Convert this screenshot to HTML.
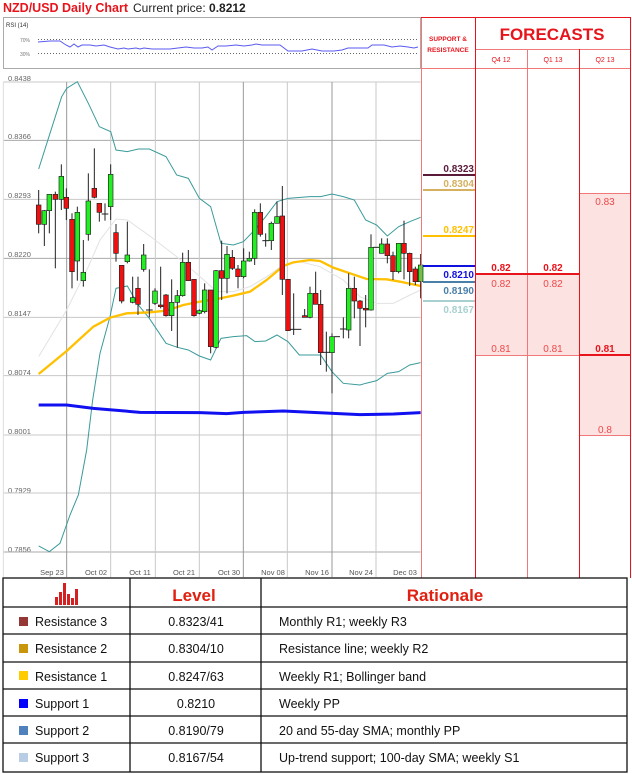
<!DOCTYPE html>
<html><head><meta charset="utf-8"><style>
html,body{margin:0;padding:0;background:#fff;width:632px;height:774px;overflow:hidden;font-family:"Liberation Sans",sans-serif}
svg{position:absolute;left:0;top:0}
</style></head><body>
<svg width="632" height="774" viewBox="0 0 632 774" xmlns="http://www.w3.org/2000/svg" font-family="Liberation Sans, sans-serif">
<!-- title -->
<text x="3" y="12" font-size="12.5" font-weight="bold" fill="#e8141c">NZD/USD Daily Chart</text>
<text x="133" y="12" font-size="12" fill="#222">Current price: <tspan font-weight="bold">0.8212</tspan></text>
<!-- RSI -->
<rect x="3.5" y="17.5" width="417" height="51" fill="#fff" stroke="#aaa"/>
<text x="6" y="27" font-size="6" fill="#333">RSI (14)</text>
<text x="20" y="42" font-size="5" fill="#777">70%</text>
<text x="20" y="56" font-size="5" fill="#777">30%</text>
<line x1="38" y1="39.5" x2="418" y2="39.5" stroke="#666" stroke-dasharray="1,2"/>
<line x1="38" y1="53.5" x2="418" y2="53.5" stroke="#666" stroke-dasharray="1,2"/>
<polyline fill="none" stroke="#5a5af0" stroke-width="1" points="38,42 50,41 60,41 66,45 70,47 74,44 78,47 82,45 90,45 96,46 104,45 110,47 118,49 124,48 128,49 136,48 140,49 144,48 152,49 160,49 170,49 178,48 186,47 194,48 202,48 208,47 212,50 218,46 226,46 236,45 244,46 252,45 256,44 262,45 272,45 280,45 288,51 302,51 312,49 322,51 334,51 342,50 348,48 358,48 368,48 372,45 384,45 392,47 400,46 408,47 414,48 418,47"/>

<!-- Y labels -->
<g font-size="7.5" fill="#666">
<text x="8" y="81">0.8438</text><text x="8" y="139">0.8366</text><text x="8" y="198">0.8293</text>
<text x="8" y="257">0.8220</text><text x="8" y="316">0.8147</text><text x="8" y="375">0.8074</text>
<text x="8" y="434">0.8001</text><text x="8" y="493">0.7929</text><text x="8" y="552">0.7856</text>
</g>
<!-- X labels -->
<g font-size="7.5" fill="#555" text-anchor="middle">
<text x="52" y="575">Sep 23</text><text x="96" y="575">Oct 02</text><text x="140" y="575">Oct 11</text>
<text x="184" y="575">Oct 21</text><text x="229" y="575">Oct 30</text><text x="273" y="575">Nov 08</text>
<text x="317" y="575">Nov 16</text><text x="361" y="575">Nov 24</text><text x="405" y="575">Dec 03</text>
</g>

<g transform="translate(0,70) scale(0.33333)">
<!-- grid -->
<g stroke="#c8c8c8" stroke-width="3">
<line x1="10" y1="36" x2="1262" y2="36"/><line x1="10" y1="211" x2="1262" y2="211" stroke="#aaa"/>
<line x1="10" y1="388" x2="1262" y2="388"/><line x1="10" y1="565" x2="1262" y2="565" stroke="#aaa"/>
<line x1="10" y1="742" x2="1262" y2="742"/><line x1="10" y1="917" x2="1262" y2="917"/>
<line x1="10" y1="1095" x2="1262" y2="1095"/><line x1="10" y1="1269" x2="1262" y2="1269"/>
<line x1="10" y1="1446" x2="1262" y2="1446" stroke="#aaa"/>
<line x1="200" y1="36" x2="200" y2="1521" stroke="#999"/><line x1="332" y1="36" x2="332" y2="1521"/>
<line x1="466" y1="36" x2="466" y2="1521"/><line x1="598" y1="36" x2="598" y2="1521"/>
<line x1="730" y1="36" x2="730" y2="1521" stroke="#999"/><line x1="862" y1="36" x2="862" y2="1521"/>
<line x1="996" y1="36" x2="996" y2="1521" stroke="#999"/><line x1="1128" y1="36" x2="1128" y2="1521"/>
<line x1="10" y1="36" x2="10" y2="1521" stroke="#ddd"/>
</g>
<!-- bands -->
<polyline fill="none" stroke="#3a9a9a" stroke-width="3" points="116,297 150,190 185,80 200,55 232,35 265,100 298,170 332,185 348,240 382,245 415,237 448,237 498,260 530,315 565,325 598,385 632,410 663,520 700,525 730,515 764,480 797,440 831,395 864,385 930,380 962,380 996,372 1030,380 1063,390 1097,450 1130,465 1162,498 1196,470 1229,455 1262,442"/>
<polyline fill="none" stroke="#3a9a9a" stroke-width="3" points="116,1428 148,1445 180,1420 210,1335 235,1275 260,1140 278,990 300,850 330,740 348,655 382,648 415,705 448,745 498,820 532,832 565,840 598,858 632,870 663,805 700,800 740,797 765,815 797,813 831,795 864,815 898,855 930,855 962,855 996,905 1030,940 1080,945 1097,940 1130,932 1162,910 1196,905 1229,885 1262,878"/>
<polyline fill="none" stroke="#e2e2e2" stroke-width="3" points="116,860 200,720 265,590 300,510 348,447 382,450 448,497 530,560 600,620 650,665 700,665 750,650 800,620 850,585 900,575 960,590 1030,630 1080,680 1130,700 1180,700 1230,675 1262,660"/>
<polyline fill="none" stroke="#ffc000" stroke-width="7" points="116,912 200,843 280,770 330,743 380,730 450,727 500,722 550,705 600,695 650,687 700,677 750,665 800,630 850,588 880,577 930,570 960,573 1000,593 1050,610 1100,627 1160,628 1200,635 1262,648"/>
<polyline fill="none" stroke="#1010f0" stroke-width="9" points="116,1005 200,1005 280,1015 420,1027 600,1028 680,1031 730,1027 850,1023 1000,1030 1080,1034 1180,1032 1262,1028"/>
<!-- candles -->
<g stroke="#222" stroke-width="3">
<line x1="116" y1="360" x2="116" y2="490"/><line x1="133" y1="420" x2="133" y2="528"/><line x1="148" y1="373" x2="148" y2="490"/><line x1="166" y1="365" x2="166" y2="595"/><line x1="184" y1="283" x2="184" y2="420"/><line x1="199" y1="355" x2="199" y2="450"/><line x1="216" y1="430" x2="216" y2="655"/><line x1="232" y1="410" x2="232" y2="632"/><line x1="250" y1="510" x2="250" y2="650"/><line x1="265" y1="310" x2="265" y2="512"/><line x1="283" y1="235" x2="283" y2="385"/><line x1="298" y1="400" x2="298" y2="455"/><line x1="315" y1="400" x2="315" y2="452"/><line x1="332" y1="283" x2="332" y2="450"/><line x1="348" y1="462" x2="348" y2="575"/><line x1="365" y1="586" x2="365" y2="700"/><line x1="382" y1="455" x2="382" y2="580"/><line x1="398" y1="620" x2="398" y2="700"/><line x1="414" y1="620" x2="414" y2="735"/><line x1="431" y1="522" x2="431" y2="605"/><line x1="448" y1="598" x2="448" y2="742"/><line x1="465" y1="655" x2="465" y2="705"/><line x1="482" y1="590" x2="482" y2="715"/><line x1="498" y1="672" x2="498" y2="740"/><line x1="515" y1="628" x2="515" y2="783"/><line x1="532" y1="660" x2="532" y2="833"/><line x1="548" y1="548" x2="548" y2="680"/><line x1="565" y1="540" x2="565" y2="632"/><line x1="582" y1="628" x2="582" y2="740"/><line x1="598" y1="718" x2="598" y2="733"/><line x1="614" y1="640" x2="614" y2="730"/><line x1="632" y1="660" x2="632" y2="850"/><line x1="648" y1="600" x2="648" y2="835"/><line x1="665" y1="512" x2="665" y2="690"/><line x1="681" y1="528" x2="681" y2="670"/><line x1="697" y1="540" x2="697" y2="600"/><line x1="714" y1="585" x2="714" y2="655"/><line x1="731" y1="535" x2="731" y2="625"/><line x1="748" y1="545" x2="748" y2="575"/><line x1="764" y1="418" x2="764" y2="585"/><line x1="781" y1="400" x2="781" y2="500"/><line x1="797" y1="490" x2="797" y2="530"/><line x1="814" y1="455" x2="814" y2="540"/><line x1="831" y1="395" x2="831" y2="460"/><line x1="847" y1="348" x2="847" y2="675"/><line x1="864" y1="628" x2="864" y2="782"/><line x1="881" y1="670" x2="881" y2="795"/><line x1="914" y1="717" x2="914" y2="742"/><line x1="930" y1="650" x2="930" y2="745"/><line x1="947" y1="605" x2="947" y2="703"/><line x1="962" y1="660" x2="962" y2="885"/><line x1="979" y1="785" x2="979" y2="905"/><line x1="996" y1="790" x2="996" y2="970"/><line x1="1030" y1="742" x2="1030" y2="805"/><line x1="1046" y1="610" x2="1046" y2="805"/><line x1="1063" y1="620" x2="1063" y2="745"/><line x1="1080" y1="690" x2="1080" y2="828"/><line x1="1097" y1="675" x2="1097" y2="772"/><line x1="1113" y1="493" x2="1113" y2="722"/><line x1="1145" y1="505" x2="1145" y2="550"/><line x1="1162" y1="505" x2="1162" y2="580"/><line x1="1179" y1="545" x2="1179" y2="630"/><line x1="1196" y1="520" x2="1196" y2="610"/><line x1="1212" y1="452" x2="1212" y2="628"/><line x1="1229" y1="548" x2="1229" y2="648"/><line x1="1246" y1="590" x2="1246" y2="645"/><line x1="1262" y1="552" x2="1262" y2="685"/>
<line x1="305" y1="432" x2="325" y2="432"/><line x1="438" y1="720" x2="458" y2="720"/><line x1="787" y1="512" x2="807" y2="512"/><line x1="871" y1="778" x2="904" y2="778"/><line x1="969" y1="847" x2="989" y2="847"/><line x1="1003" y1="800" x2="1020" y2="800"/><line x1="1020" y1="777" x2="1040" y2="777"/><line x1="1120" y1="532" x2="1140" y2="532"/>
</g>
<g stroke="#222" stroke-width="2">
<g fill="#ee1111">
<rect x="109" y="405" width="14" height="58"/><rect x="159" y="373" width="14" height="15"/><rect x="192" y="382" width="14" height="33"/><rect x="209" y="448" width="14" height="157"/><rect x="276" y="355" width="14" height="27"/><rect x="291" y="400" width="14" height="27"/><rect x="341" y="488" width="14" height="62"/><rect x="358" y="586" width="14" height="107"/><rect x="407" y="655" width="14" height="48"/><rect x="475" y="705" width="14" height="5"/><rect x="491" y="675" width="14" height="62"/><rect x="558" y="577" width="14" height="55"/><rect x="575" y="628" width="14" height="109"/><rect x="625" y="660" width="14" height="170"/><rect x="658" y="602" width="14" height="23"/><rect x="690" y="562" width="14" height="33"/><rect x="707" y="597" width="14" height="23"/><rect x="774" y="427" width="14" height="66"/><rect x="840" y="438" width="14" height="190"/><rect x="857" y="628" width="14" height="154"/><rect x="907" y="737" width="14" height="5"/><rect x="940" y="670" width="14" height="33"/><rect x="955" y="703" width="14" height="145"/><rect x="1056" y="655" width="14" height="38"/><rect x="1073" y="693" width="14" height="22"/><rect x="1090" y="715" width="14" height="5"/><rect x="1155" y="522" width="14" height="35"/><rect x="1172" y="557" width="14" height="48"/><rect x="1205" y="520" width="14" height="30"/><rect x="1222" y="550" width="14" height="55"/><rect x="1239" y="597" width="14" height="38"/>
</g>
<g fill="#22ee22">
<rect x="126" y="422" width="14" height="41"/><rect x="141" y="373" width="14" height="49"/><rect x="177" y="319" width="14" height="69"/><rect x="225" y="427" width="14" height="146"/><rect x="243" y="607" width="14" height="25"/><rect x="258" y="393" width="14" height="100"/><rect x="325" y="313" width="14" height="97"/><rect x="375" y="555" width="14" height="20"/><rect x="391" y="683" width="14" height="14"/><rect x="424" y="555" width="14" height="43"/><rect x="458" y="663" width="14" height="37"/><rect x="508" y="697" width="14" height="40"/><rect x="525" y="677" width="14" height="20"/><rect x="541" y="577" width="14" height="100"/><rect x="591" y="722" width="14" height="8"/><rect x="607" y="660" width="14" height="65"/><rect x="641" y="602" width="14" height="230"/><rect x="674" y="553" width="14" height="72"/><rect x="724" y="573" width="14" height="47"/><rect x="741" y="565" width="14" height="8"/><rect x="757" y="427" width="14" height="138"/><rect x="807" y="460" width="14" height="52"/><rect x="824" y="440" width="14" height="20"/><rect x="923" y="670" width="14" height="72"/><rect x="989" y="800" width="14" height="48"/><rect x="1039" y="655" width="14" height="125"/><rect x="1106" y="532" width="14" height="188"/><rect x="1138" y="522" width="14" height="28"/><rect x="1189" y="520" width="14" height="85"/><rect x="1255" y="585" width="14" height="50"/>
</g>
</g>
</g>

<!-- Right forecast table -->
<rect x="579" y="193" width="51" height="242" fill="#fde2e2"/>
<rect x="475" y="274" width="104" height="81" fill="#fde2e2"/>
<g stroke="#f07878" stroke-width="1">
<line x1="421.5" y1="17" x2="421.5" y2="578"/>
<line x1="527.5" y1="49" x2="527.5" y2="578"/>
<line x1="475" y1="49.5" x2="631" y2="49.5"/>
<line x1="421" y1="68.5" x2="631" y2="68.5"/>
<line x1="475" y1="355.5" x2="579" y2="355.5"/>
<line x1="579" y1="193.5" x2="631" y2="193.5"/>
<line x1="579" y1="435.5" x2="631" y2="435.5"/>
</g>
<g stroke="#e8141c" stroke-width="1">
<line x1="421" y1="17.5" x2="631" y2="17.5"/>
<line x1="475.5" y1="17" x2="475.5" y2="578"/>
<line x1="579.5" y1="49" x2="579.5" y2="578"/>
<line x1="630.5" y1="17" x2="630.5" y2="578"/>
</g>
<line x1="475" y1="274" x2="579" y2="274" stroke="#e8141c" stroke-width="2"/>
<line x1="579" y1="355" x2="631" y2="355" stroke="#e8141c" stroke-width="2"/>
<text x="448" y="41" font-size="6.5" font-weight="bold" fill="#e8141c" text-anchor="middle">SUPPORT &amp;</text>
<text x="448" y="52" font-size="6.5" font-weight="bold" fill="#e8141c" text-anchor="middle">RESISTANCE</text>
<text x="552" y="40" font-size="17" font-weight="bold" fill="#e8141c" text-anchor="middle">FORECASTS</text>
<g font-size="7" fill="#e8141c" text-anchor="middle">
<text x="501" y="62">Q4 12</text><text x="553" y="62">Q1 13</text><text x="605" y="62">Q2 13</text>
</g>
<g font-size="10" fill="#f04848" text-anchor="middle">
<text x="501" y="287">0.82</text><text x="553" y="287">0.82</text>
<text x="501" y="352">0.81</text><text x="553" y="352">0.81</text>
<text x="605" y="205">0.83</text><text x="605" y="433">0.8</text>
</g>
<g font-size="10" font-weight="bold" fill="#e8141c" text-anchor="middle">
<text x="501" y="271">0.82</text><text x="553" y="271">0.82</text><text x="605" y="352">0.81</text>
</g>
<!-- S&R levels -->
<g stroke-width="2">
<line x1="423" y1="175" x2="475" y2="175" stroke="#5a1a3a"/>
<line x1="423" y1="190" x2="475" y2="190" stroke="#d4b060"/>
<line x1="423" y1="236" x2="475" y2="236" stroke="#ffc000"/>
<line x1="423" y1="266" x2="475" y2="266" stroke="#1010e0"/>
<line x1="423" y1="282" x2="475" y2="282" stroke="#4a7fa8"/>
<line x1="423" y1="301" x2="475" y2="301" stroke="#a8d0d0"/>
</g>
<g font-size="10" font-weight="bold" text-anchor="end">
<text x="474" y="172" fill="#5a1a3a">0.8323</text>
<text x="474" y="187" fill="#d4b060">0.8304</text>
<text x="474" y="233" fill="#ffc000">0.8247</text>
<text x="474" y="278" fill="#1010e0">0.8210</text>
<text x="474" y="294" fill="#4a7fa8">0.8190</text>
<text x="474" y="313" fill="#a8d0d0">0.8167</text>
</g>

<!-- bottom table -->
<g stroke="#111" stroke-width="1.3" fill="none">
<rect x="3" y="578" width="624" height="194"/>
<line x1="130" y1="578" x2="130" y2="772"/><line x1="261" y1="578" x2="261" y2="772"/>
<line x1="3" y1="607" x2="627" y2="607"/><line x1="3" y1="634" x2="627" y2="634"/>
<line x1="3" y1="662" x2="627" y2="662"/><line x1="3" y1="689" x2="627" y2="689"/>
<line x1="3" y1="716" x2="627" y2="716"/><line x1="3" y1="743" x2="627" y2="743"/>
</g>
<g fill="#d42020">
<rect x="55" y="597" width="3" height="8"/><rect x="59" y="592" width="3" height="13"/><rect x="63" y="583" width="3" height="22"/><rect x="67" y="594" width="3" height="11"/><rect x="71" y="598" width="3" height="7"/><rect x="75" y="589" width="3" height="16"/>
</g>
<text x="194" y="601" font-size="17" font-weight="bold" fill="#e02010" text-anchor="middle">Level</text>
<text x="445" y="601" font-size="17" font-weight="bold" fill="#e02010" text-anchor="middle">Rationale</text>
<rect x="19" y="617" width="9" height="9" fill="#953735"/>
<rect x="19" y="644" width="9" height="9" fill="#c9950a"/>
<rect x="19" y="671" width="9" height="9" fill="#ffcc00"/>
<rect x="19" y="699" width="9" height="9" fill="#0000ff"/>
<rect x="19" y="726" width="9" height="9" fill="#4f81bd"/>
<rect x="19" y="753" width="9" height="9" fill="#b9cde5"/>
<g font-size="12.5" fill="#111">
<text x="35" y="626">Resistance 3</text><text x="35" y="653">Resistance 2</text><text x="35" y="681">Resistance 1</text>
<text x="35" y="708">Support 1</text><text x="35" y="735">Support 2</text><text x="35" y="762">Support 3</text>
<g text-anchor="middle">
<text x="196" y="626">0.8323/41</text><text x="196" y="653">0.8304/10</text><text x="196" y="681">0.8247/63</text>
<text x="196" y="708">0.8210</text><text x="196" y="735">0.8190/79</text><text x="196" y="762">0.8167/54</text>
</g>
<text x="279" y="626">Monthly R1; weekly R3</text><text x="279" y="653">Resistance line; weekly R2</text>
<text x="279" y="681">Weekly R1; Bollinger band</text><text x="279" y="708">Weekly PP</text>
<text x="279" y="735">20 and 55-day SMA; monthly PP</text><text x="279" y="762">Up-trend support; 100-day SMA; weekly S1</text>
</g>
</svg>
</body></html>
